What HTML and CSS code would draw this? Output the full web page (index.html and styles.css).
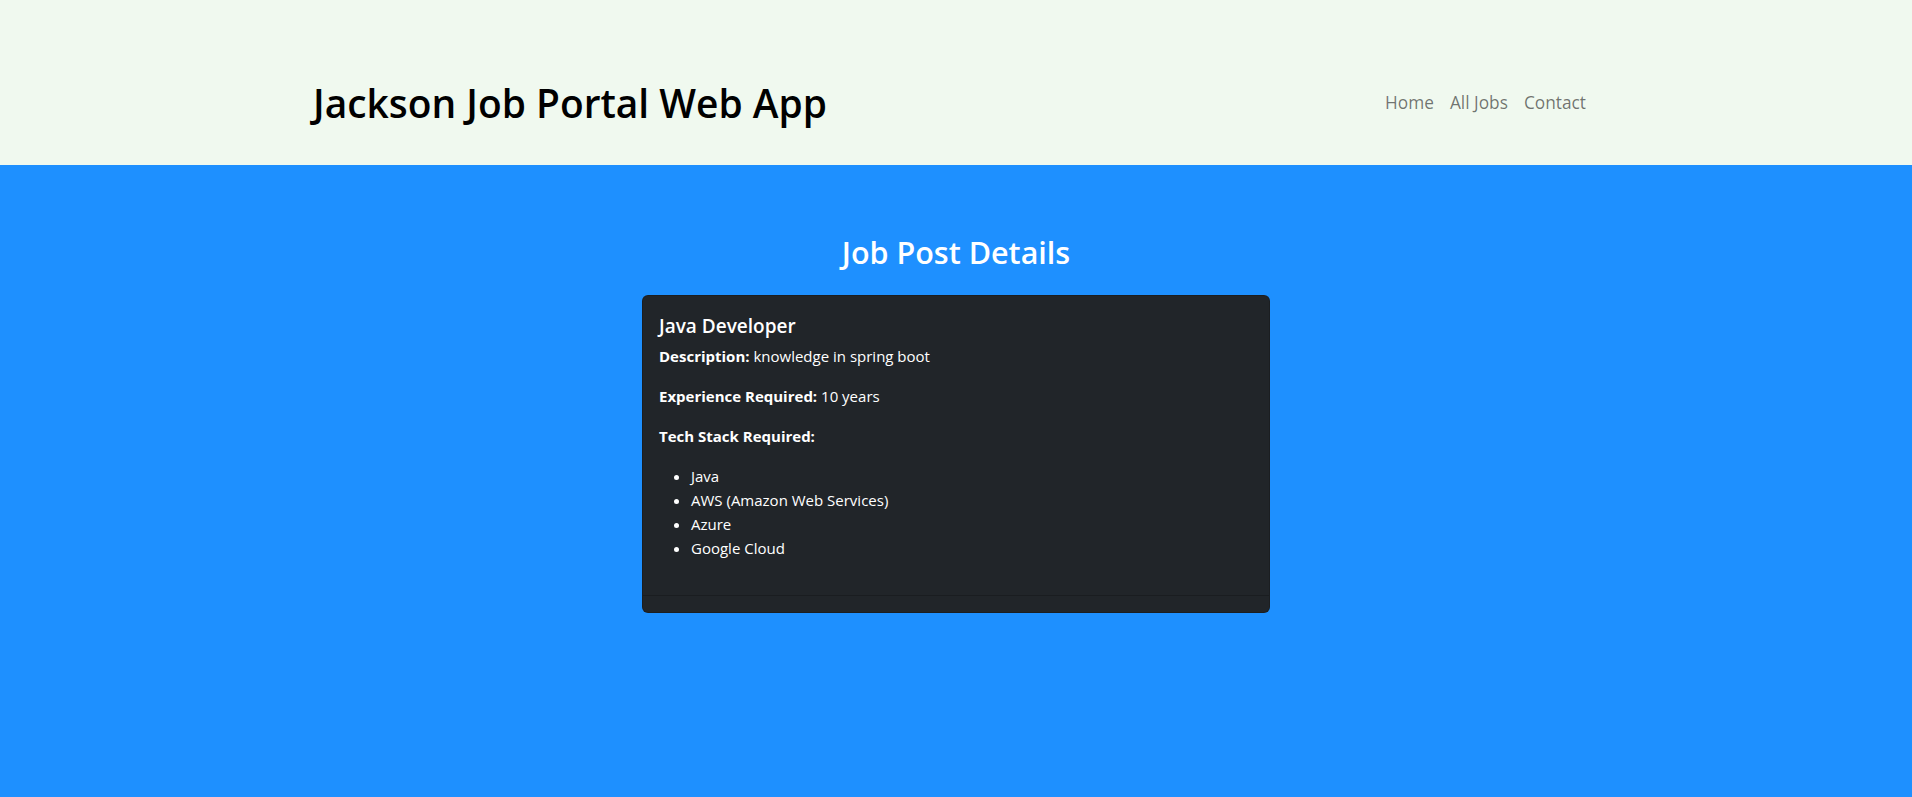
FILE: index.html
```html
<!DOCTYPE html>
<html lang="en">
<head>
<meta charset="utf-8">
<title>Jackson Job Portal Web App</title>
<link rel="stylesheet" href="styles.css">
</head>
<body>
<header class="site-header">
  <div class="header-inner">
    <h1 class="brand">Jackson Job Portal Web App</h1>
    <nav class="nav">
      <a class="nav-link" href="#">Home</a>
      <a class="nav-link" href="#">All Jobs</a>
      <a class="nav-link" href="#">Contact</a>
    </nav>
  </div>
</header>
<main class="main">
  <h2 class="page-title">Job Post Details</h2>
  <div class="card">
    <div class="card-body">
      <h5 class="card-title">Java Developer</h5>
      <p class="card-text"><strong>Description:</strong> knowledge in spring boot</p>
      <p class="card-text"><strong>Experience Required:</strong> 10 years</p>
      <p class="card-text"><strong>Tech Stack Required:</strong></p>
      <ul class="stack-list">
        <li>Java</li>
        <li>AWS (Amazon Web Services)</li>
        <li>Azure</li>
        <li>Google Cloud</li>
      </ul>
    </div>
    <div class="card-footer"></div>
  </div>
</main>
</body>
</html>
```
FILE: styles.css
```css
* { box-sizing: border-box; }
html, body { height: 100%; }
body {
  margin: 0;
  font-family: "Open Sans", "Noto Sans", "Liberation Sans", sans-serif;
  font-size: 15px;
  line-height: 24px;
  color: #212529;
  background: #1e90ff;
  display: flex;
  flex-direction: column;
}
.site-header {
  background: #f0f9ef;
  height: 165px;
  padding: 80px 318px 0 313px;
}
.header-inner {
  display: flex;
  align-items: center;
  justify-content: space-between;
}
.brand {
  margin: 0;
  font-size: 38.9px;
  font-weight: 600;
  line-height: 1.2;
  color: #000;
}
.nav { display: flex; }
.nav-link {
  padding: 8px 8px;
  font-size: 17.3px;
  line-height: 24px;
  color: rgba(0,0,0,0.55);
  text-decoration: none;
}
.main {
  flex: 1;
  display: flex;
  flex-direction: column;
  align-items: center;
  padding-top: 69px;
}
.page-title {
  margin: 0 0 24px;
  font-size: 30.5px;
  font-weight: 600;
  line-height: 1.2;
  color: #fff;
}
.card {
  width: 628px;
  background: #212529;
  color: #fff;
  border: 1px solid rgba(0,0,0,0.175);
  border-radius: 6px;
}
.card-body { padding: 17px 16px 16px; }
.card-title {
  margin: 0 0 5px;
  font-size: 19px;
  font-weight: 600;
  line-height: 1.4;
}
.card-text { margin: 0 0 16px; }
.card-text strong { font-weight: 700; }
.stack-list {
  margin: 0 0 19px;
  padding-left: 32px;
}
.card-footer {
  height: 17px;
  border-top: 1px solid rgba(0,0,0,0.2);
}
```
